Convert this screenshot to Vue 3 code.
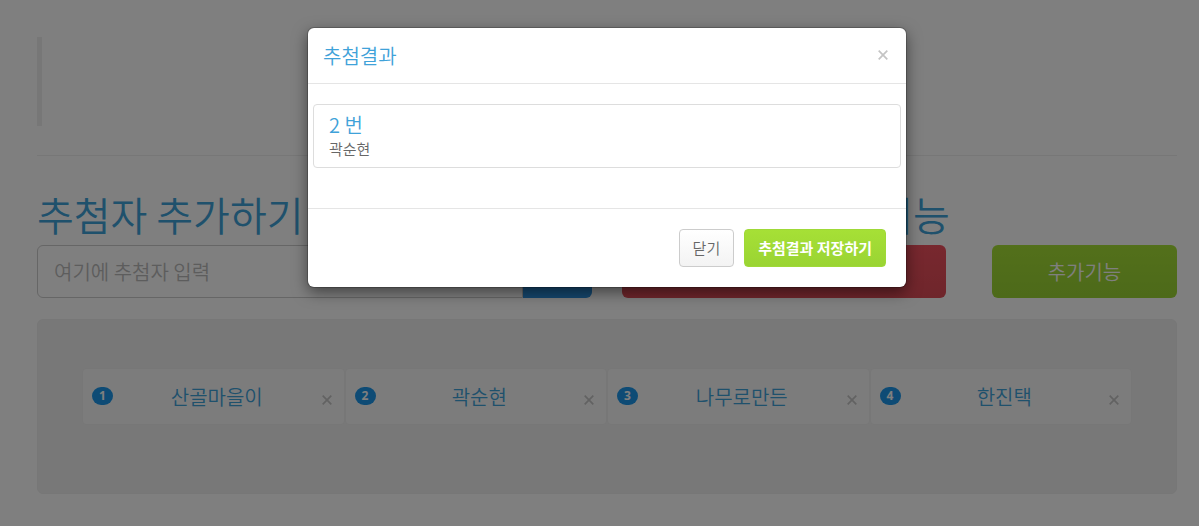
<script setup>
import { ref } from 'vue'

const entry = ref('')
const people = [
  { no: 1, name: '산골마을이' },
  { no: 2, name: '곽순현' },
  { no: 3, name: '나무로만든' },
  { no: 4, name: '한진택' }
]
const winners = [{ no: 2, name: '곽순현' }]
</script>

<template>
  <div class="page">
    <main class="content">
      <blockquote class="notice"></blockquote>
      <hr class="rule" />
      <div class="columns">
        <section>
          <h1><label for="entry">추첨자 추가하기</label></h1>
          <form class="entry-group" @submit.prevent>
            <input id="entry" v-model="entry" type="text" placeholder="여기에 추첨자 입력" />
            <button type="submit" class="btn-add" aria-label="추가"></button>
          </form>
        </section>
        <section>
          <h1>추첨하기 / 추가기능</h1>
          <div class="actions">
            <button type="button" class="btn-large btn-draw">추첨하기</button>
            <button type="button" class="btn-large btn-extra">추가기능</button>
          </div>
        </section>
      </div>
      <ul class="well">
        <li v-for="p in people" :key="p.no" class="person">
          <span class="badge">{{ p.no }}</span>
          <span class="person-name">{{ p.name }}</span>
          <button type="button" class="remove" aria-label="삭제">
            <svg viewBox="0 0 10 10" width="10" height="10"><path d="M.7 .7L9.3 9.3M9.3 .7L.7 9.3" /></svg>
          </button>
        </li>
      </ul>
    </main>

    <div class="backdrop">
      <div class="modal" role="dialog" aria-modal="true" aria-labelledby="modal-title">
        <header class="modal-header">
          <h2 id="modal-title">추첨결과</h2>
          <button type="button" class="close" aria-label="닫기">
            <svg viewBox="0 0 10 10" width="10" height="10"><path d="M.7 .7L9.3 9.3M9.3 .7L.7 9.3" /></svg>
          </button>
        </header>
        <div class="modal-body">
          <ul class="results">
            <li v-for="w in winners" :key="w.no">
              <h3>{{ w.no }} 번</h3>
              <p>{{ w.name }}</p>
            </li>
          </ul>
        </div>
        <footer class="modal-footer">
          <button type="button" class="btn btn-default">닫기</button>
          <button type="button" class="btn btn-save">추첨결과 저장하기</button>
        </footer>
      </div>
    </div>
  </div>
</template>

<style>
body {
  margin: 0;
  background: #fff;
}
</style>

<style scoped>
* {
  box-sizing: border-box;
}

.page {
  position: relative;
  min-height: 100vh;
  overflow: hidden;
  background: #fff;
  color: #666;
  font: 15px/20px "Noto Sans CJK KR", sans-serif;
}

button,
input {
  font: inherit;
}

ul {
  margin: 0;
  padding: 0;
  list-style: none;
}

.content {
  padding: 37px 22px 32px 37px;
}

.notice {
  height: 89px;
  margin: 0;
  border-left: 5px solid #eee;
}

.rule {
  margin: 29px 0 36px;
  border: 0;
  border-top: 1px solid #eee;
}

.columns {
  display: grid;
  grid-template-columns: 1fr 1fr;
  gap: 30px;
}

h1 {
  margin: 0 0 9px;
  color: #3fa2d9;
  font-size: 40px;
  font-weight: 350;
  line-height: 44px;
  white-space: nowrap;
}

.entry-group,
.actions {
  display: flex;
  height: 53px;
}

.entry-group input {
  flex: 1;
  min-width: 0;
  padding: 0 16px;
  border: 1px solid #ccc;
  border-radius: 6px 0 0 6px;
  background: #fff;
  font-size: 20px;
  font-weight: 350;
}

.entry-group input::placeholder {
  color: #bbb;
  opacity: 1;
}

.btn-add {
  width: 69px;
  border: 0;
  border-radius: 0 6px 6px 0;
  background: #2a8fdc;
}

.actions {
  gap: 46px;
}

.btn-large {
  padding: 0;
  border: 0;
  border-radius: 6px;
  color: #fff;
  font-size: 20px;
  font-weight: 350;
}

.btn-draw {
  flex: 7;
  background: linear-gradient(#f0505e, #de4c57);
}

.btn-extra {
  flex: 4;
  background: linear-gradient(#a6e036, #9ad433);
}

.well {
  display: grid;
  grid-template-columns: repeat(4, 1fr);
  align-content: start;
  min-height: 175px;
  margin-top: 21px;
  padding: 48px 44px;
  border: 1px solid #eee;
  border-radius: 6px;
  background: #f1f1f1;
}

.person {
  display: grid;
  grid-template-columns: 30px 1fr 20px;
  align-items: center;
  height: 57px;
  padding: 0 12px 2px 9px;
  border: 1px solid #eee;
  border-radius: 4px;
  background: #f9f9f9;
}

.badge {
  display: block;
  width: 21px;
  border-radius: 9px;
  background: #1c97ea;
  color: #fff;
  font: bold 12px/18px "Open Sans", sans-serif;
  text-align: center;
}

.person-name {
  padding-top: 2px;
  color: #3fa2d9;
  font-size: 20px;
  font-weight: 350;
  text-align: center;
}

.remove,
.close {
  display: flex;
  justify-content: flex-end;
  padding: 0;
  border: 0;
  background: none;
}

.remove {
  padding-top: 8px;
}

.close {
  padding-bottom: 2px;
}

.remove path,
.close path {
  fill: none;
  stroke: #c4c4c4;
  stroke-width: 1.7;
}

.backdrop {
  position: absolute;
  inset: 0;
  padding: 28px 293px 0 308px;
  background: rgba(0, 0, 0, 0.5);
}

.modal {
  border-radius: 6px;
  background: #fff;
  box-shadow: 0 0 0 1px rgba(0, 0, 0, 0.2), 0 5px 15px rgba(0, 0, 0, 0.5);
}

.modal-header {
  display: flex;
  align-items: center;
  justify-content: space-between;
  height: 56px;
  padding: 0 18px 0 15px;
  border-bottom: 1px solid #e5e5e5;
}

h2,
h3 {
  margin: 0;
  color: #3fa2d9;
  font-size: 20px;
  font-weight: 350;
}

.modal-body {
  padding: 20px 5px 40px;
}

.results li {
  padding: 9px 15px 7px;
  border: 1px solid #ddd;
  border-radius: 4px;
}

h3 {
  margin-bottom: 2px;
  line-height: 22px;
}

.results p {
  margin: 0;
  font-weight: 350;
  line-height: 22px;
}

.modal-footer {
  display: flex;
  justify-content: flex-end;
  gap: 10px;
  padding: 20px;
  border-top: 1px solid #e5e5e5;
}

.btn {
  height: 38px;
  padding: 0 13px;
  border: 1px solid #ccc;
  border-radius: 4px;
  white-space: nowrap;
}

.btn-default {
  background: linear-gradient(#fff, #f3f3f3);
  color: #666;
  font-weight: 350;
}

.btn-save {
  border-color: #9fd938;
  background: linear-gradient(#a6e036, #9ad433);
  color: #fff;
  font-weight: 700;
}
</style>
